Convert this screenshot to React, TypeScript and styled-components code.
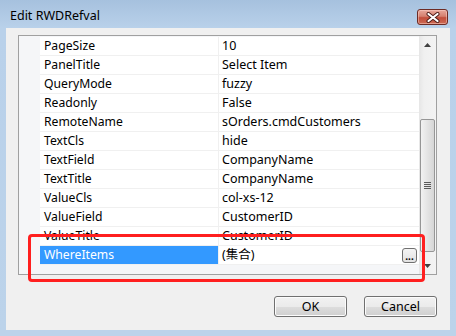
import * as React from 'react';
import styled, { createGlobalStyle } from 'styled-components';

const GlobalStyle = createGlobalStyle`
    html, body {
        margin: 0;
        padding: 0;
        background: #b9d1ea;
    }
    body {
        font-family: "Noto Sans", "Noto Sans CJK TC", sans-serif;
        font-size: 12px;
    }
`;

interface IProp {
    name: string;
    value: string;
}

const props: IProp[] = [
    { name: 'PageSize', value: '10' },
    { name: 'PanelTitle', value: 'Select Item' },
    { name: 'QueryMode', value: 'fuzzy' },
    { name: 'Readonly', value: 'False' },
    { name: 'RemoteName', value: 'sOrders.cmdCustomers' },
    { name: 'TextCls', value: 'hide' },
    { name: 'TextField', value: 'CompanyName' },
    { name: 'TextTitle', value: 'CompanyName' },
    { name: 'ValueCls', value: 'col-xs-12' },
    { name: 'ValueField', value: 'CustomerID' },
    { name: 'ValueTitle', value: 'CustomerID' },
    { name: 'WhereItems', value: '(集合)' }
];

const App = () => {
    return(
        <>
            <GlobalStyle/>
            <Window>
                <TitleBar>
                    <Title>Edit RWDRefval</Title>
                    <CloseButton>
                        <svg width="14" height="11" viewBox="0 0 14 11">
                            <path d="M2.5 2 L11.5 9 M11.5 2 L2.5 9" stroke="#4a1a16" strokeWidth="4" strokeLinecap="round"/>
                            <path d="M2.5 2 L11.5 9 M11.5 2 L2.5 9" stroke="#ffffff" strokeWidth="2.2" strokeLinecap="round"/>
                        </svg>
                    </CloseButton>
                </TitleBar>
                <Client>
                    <Grid>
                        <Rows>
                            { props.map((p, i) => (
                                <Row key={ p.name }>
                                    <Margin/>
                                    <NameCell selected={ i === props.length - 1 }>{ p.name }</NameCell>
                                    <ValueCell>
                                        { p.value }
                                        { i === props.length - 1 && <EllipsisButton>...</EllipsisButton> }
                                    </ValueCell>
                                </Row>
                            )) }
                            <Filler/>
                        </Rows>
                        <ScrollBar>
                            <Arrow>
                                <svg width="7" height="4" viewBox="0 0 7 4"><path d="M0 4 L3.5 0 L7 4 Z" fill="#404040"/></svg>
                            </Arrow>
                            <Track>
                                <Thumb>
                                    <Grip/>
                                    <Grip/>
                                    <Grip/>
                                    <Grip/>
                                </Thumb>
                            </Track>
                            <Arrow>
                                <svg width="7" height="4" viewBox="0 0 7 4"><path d="M0 0 L3.5 4 L7 0 Z" fill="#404040"/></svg>
                            </Arrow>
                        </ScrollBar>
                    </Grid>
                    <Footer>
                        <DialogButton>OK</DialogButton>
                        <DialogButton>Cancel</DialogButton>
                    </Footer>
                    <Highlight/>
                </Client>
            </Window>
        </>
    );
};

const Window = styled.div`
    width: 456px;
    height: 336px;
    display: flex;
    flex-direction: column;
    background: linear-gradient(to bottom, #a6c1de 0px, #b9d1ea 28px, #bcd3ea 100%);
    box-sizing: border-box;
`;

const TitleBar = styled.div`
    height: 28px;
    display: flex;
    align-items: flex-start;
    justify-content: space-between;
    padding: 0 8px 0 10px;
`;

const Title = styled.div`
    margin-top: 7px;
    font-size: 12.5px;
    color: #000;
`;

const CloseButton = styled.div`
    margin-top: 9px;
    width: 31px;
    height: 16px;
    box-sizing: border-box;
    border: 1px solid #6d2b24;
    border-radius: 3px;
    background: linear-gradient(to bottom, #e8a89c 0%, #d5806f 45%, #c24e3b 55%, #cc6a55 100%);
    box-shadow: inset 0 0 0 1px rgba(255, 220, 210, .45);
    display: flex;
    align-items: center;
    justify-content: center;
`;

const Client = styled.div`
    position: relative;
    flex: 1;
    margin: 0 6px 6px 6px;
    background: #f0f0f0;
    display: flex;
    flex-direction: column;
    padding: 7px 13px 13px 12px;
`;

const Grid = styled.div`
    height: 240px;
    box-sizing: border-box;
    border: 1px solid #a0a0a0;
    display: flex;
    background: #f5f6f8;
`;

const Rows = styled.div`
    flex: 1;
    display: flex;
    flex-direction: column;
    padding-top: 1px;
`;

const Row = styled.div`
    display: flex;
    height: 19px;
    box-sizing: border-box;
`;

const Margin = styled.div`
    width: 21px;
    background: #f5f6f8;
`;

const NameCell = styled.div<{ selected?: boolean }>`
    width: 179px;
    box-sizing: border-box;
    padding-left: 4px;
    line-height: 18px;
    font-size: 12.2px;
    border-bottom: 1px solid #f0f0f0;
    border-right: 1px solid #f0f0f0;
    background: ${ p => p.selected ? '#3399ff' : '#ffffff' };
    color: ${ p => p.selected ? '#ffffff' : '#000000' };
    white-space: nowrap;
`;

const ValueCell = styled.div`
    flex: 1;
    position: relative;
    box-sizing: border-box;
    padding-left: 3px;
    line-height: 18px;
    font-size: 12.5px;
    border-bottom: 1px solid #f0f0f0;
    background: #ffffff;
    color: #000;
    white-space: nowrap;
`;

const EllipsisButton = styled.div`
    position: absolute;
    right: 2px;
    top: 2px;
    width: 15px;
    height: 15px;
    box-sizing: border-box;
    border: 1px solid #707070;
    border-radius: 3px;
    background: linear-gradient(to bottom, #f4f4f4, #e2e2e2);
    font-size: 10px;
    line-height: 14px;
    text-align: center;
    color: #000;
    font-weight: bold;
`;

const Filler = styled.div`
    flex: 1;
`;

const ScrollBar = styled.div`
    width: 17px;
    display: flex;
    flex-direction: column;
    background: linear-gradient(to right, #e6e6e6, #f0f0f0 30%, #f3f3f3);
`;

const Arrow = styled.div`
    height: 17px;
    display: flex;
    align-items: center;
    justify-content: center;
`;

const Track = styled.div`
    flex: 1;
    display: flex;
    flex-direction: column;
    justify-content: flex-end;
    padding: 0 1px 5px 1px;
`;

const Thumb = styled.div`
    height: 133px;
    box-sizing: border-box;
    border: 1px solid #969696;
    border-radius: 2px;
    background: linear-gradient(to right, #f2f2f2, #e4e4e4 50%, #d6d6d6);
    display: flex;
    flex-direction: column;
    align-items: center;
    justify-content: center;
    gap: 1px;
`;

const Grip = styled.div`
    width: 7px;
    height: 1px;
    background: #5a5a5a;
`;

const Footer = styled.div`
    margin-top: 21px;
    display: flex;
    justify-content: flex-end;
    gap: 17px;
`;

const DialogButton = styled.div`
    width: 73px;
    height: 21px;
    box-sizing: border-box;
    border: 1px solid #707070;
    border-radius: 3px;
    background: linear-gradient(to bottom, #f2f2f2 0%, #ebebeb 50%, #dddddd 51%, #cfcfcf 100%);
    box-shadow: inset 0 0 0 1px #fcfcfc;
    display: flex;
    align-items: center;
    justify-content: center;
    color: #000;
    font-size: 12.5px;
`;

const Highlight = styled.div`
    position: absolute;
    left: 22px;
    top: 206px;
    width: 397px;
    height: 48px;
    box-sizing: border-box;
    border: 3px solid #ff1f1f;
    border-radius: 4px;
    pointer-events: none;
`;

export default App;
